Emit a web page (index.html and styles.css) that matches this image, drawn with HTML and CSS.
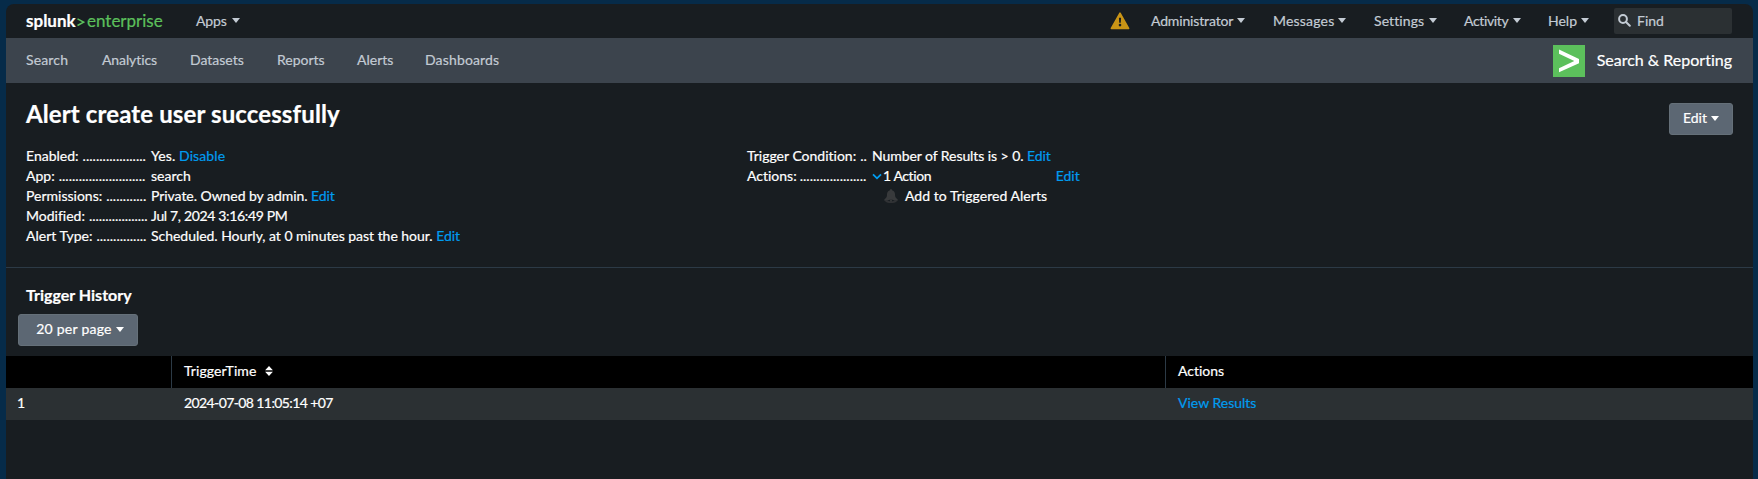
FILE: index.html
```html
<!DOCTYPE html>
<html lang="en">
<head>
<meta charset="utf-8">
<title>Alert create user successfully | Splunk</title>
<link rel="stylesheet" href="styles.css">
</head>
<body>
<div class="window">
  <header class="topbar">
    <div class="logo"><span class="logo-name">splunk</span><svg class="logo-mark" viewBox="0 0 8 9"><path d="M.5 .9 6.6 4.2.5 7.5" /></svg><span class="logo-edition">enterprise</span></div>
    <div class="menu menu-apps">Apps<i class="caret"></i></div>
    <svg class="warning" viewBox="0 0 20 18"><path d="M10 1.2 18.6 16.5H1.4Z" fill="#c99416" stroke="#c99416" stroke-width="1.6" stroke-linejoin="round"/><path d="M8.9 5.8h2.2l-.3 5H9.2Z" fill="#181d21"/><circle cx="10" cy="13.1" r="1.3" fill="#181d21"/></svg>
    <div class="menu menu-admin">Administrator<i class="caret"></i></div>
    <div class="menu menu-messages">Messages<i class="caret"></i></div>
    <div class="menu menu-settings">Settings<i class="caret"></i></div>
    <div class="menu menu-activity">Activity<i class="caret"></i></div>
    <div class="menu menu-help">Help<i class="caret"></i></div>
    <div class="find"><svg class="find-icon" viewBox="0 0 13 13"><circle cx="5" cy="5" r="3.9"/><path d="M8 8l3.8 3.8"/></svg>Find</div>
  </header>
  <nav class="appnav">
    <a class="tab tab-search">Search</a>
    <a class="tab tab-analytics">Analytics</a>
    <a class="tab tab-datasets">Datasets</a>
    <a class="tab tab-reports">Reports</a>
    <a class="tab tab-alerts">Alerts</a>
    <a class="tab tab-dashboards">Dashboards</a>
    <div class="app"><svg class="app-icon" viewBox="0 0 32 32"><rect width="32" height="32" fill="#5cc05c"/><path d="M6 4.5 26 14v4.2L6 27.3v-4.1l15.300-7.100L6 8.700Z" fill="#fff"/></svg><span class="app-name">Search &amp; Reporting</span></div>
  </nav>
  <section class="summary">
    <h1 class="title">Alert create user successfully</h1>
    <button class="button button-edit">Edit<i class="caret"></i></button>
    <dl class="details">
      <dt class="term">Enabled:<span class="dots">...................</span></dt><dd class="value enabled">Yes. <a class="link">Disable</a></dd>
      <dt class="term">App:<span class="dots">..........................</span></dt><dd class="value">search</dd>
      <dt class="term">Permissions:<span class="dots">............</span></dt><dd class="value permissions">Private. Owned by admin. <a class="link">Edit</a></dd>
      <dt class="term">Modified:<span class="dots dots-modified">..................</span></dt><dd class="value date">Jul 7, 2024 3:16:49 PM</dd>
      <dt class="term">Alert Type:<span class="dots">...............</span></dt><dd class="value schedule">Scheduled. Hourly, at 0 minutes past the hour. <a class="link">Edit</a></dd>
    </dl>
    <dl class="details">
      <dt class="term">Trigger Condition:<span class="dots">..</span></dt><dd class="value condition">Number of Results is &gt; 0. <a class="link">Edit</a></dd>
      <dt class="term term-actions">Actions:<span class="dots">....................</span></dt><dd class="value actions"><svg class="chevron" viewBox="0 0 10 7"><path d="M1 1.300l4 4 4-4"/></svg>1 Action<a class="link actions-edit">Edit</a></dd>
      <dt></dt><dd class="value triggered"><svg class="bell" viewBox="0 0 14 14"><path d="M7 .2c.8 0 1.300.5 1.300 1.200 2 .6 2.700 2.100 2.700 4.100 0 2.300.5 3.400 2.600 4.800v1.500H.4v-1.500C2.500 8.900 3 7.800 3 5.500c0-2 .7-3.500 2.700-4.100C5.700.7 6.200.2 7 .2Z"/><path d="M1 12.300h12c-1 1-3.500 1.500-6 1.500s-5-.5-6-1.500Z"/><path d="M3.500 11.600c1-1 6-1 7 0-1 1-6 1-7 0Z" fill="#181d21"/><circle cx="7" cy="11.700" r="1"/></svg>Add to Triggered Alerts</dd>
    </dl>
  </section>
  <section class="history">
    <h2 class="subtitle">Trigger History</h2>
    <button class="button button-page">20 per page<i class="caret"></i></button>
    <div class="grid">
      <div class="head"></div>
      <div class="head head-time">TriggerTime<svg class="sort" viewBox="0 0 8 10"><path d="M4 0l3.900 4.200H.1ZM4 10 .1 5.800h7.800Z"/></svg></div>
      <div class="head">Actions</div>
      <div class="cell cell-index">1</div>
      <div class="cell timestamp">2024-07-08 11:05:14 +07</div>
      <div class="cell"><a class="link">View Results</a></div>
    </div>
  </section>
</div>
</body>
</html>
```
FILE: styles.css
```css
* { box-sizing: border-box; }
body {
  margin: 0;
  height: 479px;
  overflow: hidden;
  padding: 4px 5px 0 6px;
  background: #062b49;
  color: #fff;
  font: 14px/20px Lato, "Liberation Sans", sans-serif;
  font-variant-ligatures: none;
  -webkit-text-stroke: .2px currentColor;
  white-space: nowrap;
}
.window {
  height: 475px;
  background: #181d21;
  border-radius: 8px 8px 0 0;
  overflow: hidden;
}
.caret {
  display: inline-block;
  margin-left: 5px;
  border: 4px solid transparent;
  border-top: 5px solid currentColor;
  border-bottom: 0;
  flex: none;
}
.topbar {
  display: flex;
  align-items: center;
  height: 34px;
  padding: 0 21px 0 20px;
  color: #c3cbd4;
}
.logo {
  display: flex;
  align-items: center;
  width: 170px;
  height: 26px;
  font-size: 17px;
}
.logo-name { width: 50px; color: #fff; font-weight: bold; }
.logo-mark { width: 8px; height: 9px; margin: 3px 2px 0 1px; fill: none; stroke: #5cc05c; stroke-width: 1.5; }
.logo-edition { color: #5cc05c; }
.menu { display: flex; align-items: center; padding-bottom: 1px; }
.menu-apps { width: 914px; letter-spacing: -.1px; }
.warning { width: 20px; height: 18px; margin-right: 21px; }
.menu-admin { width: 122px; letter-spacing: -.15px; }
.menu-messages { width: 101px; letter-spacing: .2px; }
.menu-settings { width: 90px; letter-spacing: .1px; }
.menu-activity { width: 84px; letter-spacing: -.35px; }
.menu-help { width: 66px; }
.menu-admin .caret, .menu-messages .caret, .menu-help .caret { margin-left: 4px; }
.find {
  display: flex;
  align-items: center;
  flex: 1;
  height: 26px;
  padding: 0 0 1px 4px;
  background: #2b3033;
  border-radius: 2px;
}
.find-icon { width: 13px; height: 13px; margin-right: 6px; fill: none; stroke: #c3cbd4; stroke-width: 2; stroke-linecap: round; }
.appnav {
  display: flex;
  align-items: center;
  height: 45px;
  padding: 0 21px 0 20px;
  background: #3c444d;
  color: #c3cbd4;
}
.tab { padding-bottom: 1px; }
.tab-search { width: 76px; letter-spacing: .15px; }
.tab-analytics { width: 88px; letter-spacing: -.1px; }
.tab-datasets { width: 87px; }
.tab-reports { width: 80px; }
.tab-alerts { width: 68px; }
.tab-dashboards { letter-spacing: .15px; }
.app { display: flex; align-items: center; margin-left: auto; color: #fff; font-size: 16px; }
.app-icon { width: 32px; height: 32px; margin-right: 12px; }
.app-name { padding-bottom: 1px; }
.summary {
  display: grid;
  grid-template-columns: 721px 1fr auto;
  grid-template-rows: 63px auto;
  height: 185px;
  padding: 0 20px;
  border-bottom: 1px solid #2c3a46;
}
.title { grid-column: 1 / 3; margin: 17px 0 0; font-size: 24px; line-height: 28px; letter-spacing: .12px; }
.button {
  display: flex;
  align-items: center;
  justify-content: center;
  height: 32px;
  padding: 0 0 2px;
  border: 1px solid #657079;
  border-radius: 3px;
  background: #5c6773;
  color: #fff;
  font: inherit;
}
.button-edit { width: 64px; margin-top: 20px; }
.button-edit .caret { margin-left: 4px; }
.details {
  display: grid;
  grid-template-columns: 125px auto;
  grid-auto-rows: 20px;
  align-content: start;
  justify-content: start;
  margin: 0;
}
.term { display: flex; width: 122px; }
.dots { margin-left: 4px; letter-spacing: .03px; }
.dots-modified { letter-spacing: -.05px; }
.term-actions .dots { margin-left: 3px; }
.value { margin: 0; }
.link { color: #009cf0; }
.enabled { letter-spacing: .1px; }
.permissions { letter-spacing: -.05px; }
.schedule { letter-spacing: -.03px; }
.date { letter-spacing: -.34px; }
.condition { letter-spacing: -.07px; }
.actions { display: flex; align-items: center; letter-spacing: -.4px; }
.chevron { width: 10px; height: 7px; margin: 0 1px 0 0; fill: none; stroke: #009cf0; stroke-width: 1.8; }
.actions-edit { margin-left: auto; margin-right: -29px; letter-spacing: 0; }
.triggered { display: flex; align-items: center; padding-left: 12px; letter-spacing: .04px; }
.bell { width: 14px; height: 14px; margin-right: 7px; fill: #383a3c; }
.history { padding-top: 17px; }
.subtitle { margin: 0 0 9px 20px; font-size: 16px; line-height: 20px; }
.button-page { width: 120px; margin: 0 0 10px 12px; padding-left: 4px; letter-spacing: .25px; }
.button-page .caret { margin-left: 4px; }
.grid { display: grid; grid-template-columns: 165px 994px 1fr; grid-auto-rows: 32px; }
.head, .cell { display: flex; align-items: center; padding: 0 0 2px 12px; }
.head { background: #000; }
.head + .head { border-left: 1px solid #2c3a46; }
.head-time { letter-spacing: .1px; }
.cell { padding-left: 13px; background: #2b3033; }
.cell-index { padding-left: 11px; }
.sort { width: 8px; height: 10px; margin-left: 9px; fill: #fff; }
.timestamp { letter-spacing: -.6px; }
```
